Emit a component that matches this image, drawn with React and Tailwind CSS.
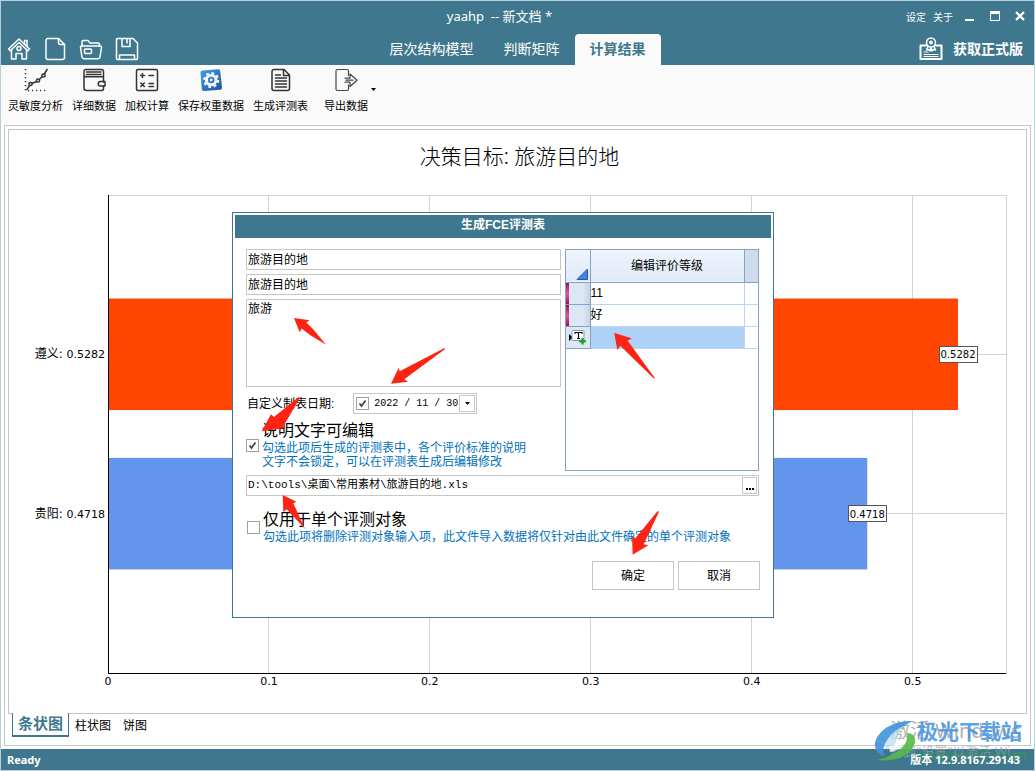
const AXIS_MAX = 0.558;
const TICKS = [0, 0.1, 0.2, 0.3, 0.4, 0.5];
const RESULTS = [
  { name: "遵义", value: 0.5282, color: "#ff4500", center: 33.33 },
  { name: "贵阳", value: 0.4718, color: "#6495ed", center: 66.67 },
];
const pct = (n) => `${n}%`;
const xOf = (v) => (v / AXIS_MAX) * 100;

const Svg = ({ className = "size-6", children, ...rest }) => (
  <svg viewBox="0 0 24 24" fill="none" stroke="currentColor" strokeWidth="1.5" strokeLinejoin="round" strokeLinecap="round" className={className} aria-hidden="true" {...rest}>
    {children}
  </svg>
);

const HomeIcon = () => (
  <Svg>
    <path d="M1.5 12 12 2l10.500 10-1.800 1.700L12 5.500l-8.700 8.200z" />
    <path d="M4.500 12.500V22H9v-5.500h6V22h4.500v-9.500M17.500 7V3.500h2.500V9.500" />
    <circle cx="12" cy="11.500" r="2" />
  </Svg>
);
const NewIcon = () => (
  <Svg>
    <path d="M5 1.500h10.500L21.500 7.500V20.500a2 2 0 0 1-2 2H5a2 2 0 0 1-2-2V3.500a2 2 0 0 1 2-2z" />
    <path d="M15.500 2v3.500a2 2 0 0 0 2 2h4" />
  </Svg>
);
const OpenIcon = () => (
  <Svg>
    <path d="M3 9V5a1.500 1.500 0 0 1 1.500-1.500H9l2 2.500h8a1.500 1.500 0 0 1 1.500 1.500V9" />
    <path d="M2.500 9h19a1 1 0 0 1 1 1.200L21 20a2 2 0 0 1-2 1.700H5A2 2 0 0 1 3 20L1.500 10.200A1 1 0 0 1 2.500 9z" />
    <rect x="5.500" y="12" width="7" height="4.500" rx="1" />
  </Svg>
);
const SaveIcon = () => (
  <Svg>
    <path d="M2.500 1.500H18L22.500 6v15.500a1 1 0 0 1-1 1h-19a1 1 0 0 1-1-1v-19a1 1 0 0 1 1-1z" />
    <path d="M7 2v7.500h8V2M12 2v4M4.500 22v-4h15v4" />
  </Svg>
);
const LicenseIcon = () => (
  <Svg>
    <path d="M7 8.500H1.500v13.500h21V8.500H17" strokeWidth="2" />
    <circle cx="12" cy="5.500" r="4.500" />
    <circle cx="12" cy="5.500" r="1.200" />
    <path d="M9 9.500 7.500 13l2.500-.5 1 1.500 1-3 1 3 1-1.500 2.500.5L15 9.500" />
    <path d="M5 15h4M5 17.500h14M5 19.500h14" strokeWidth="1" />
  </Svg>
);

const SensitivityIcon = () => (
  <Svg>
    <path d="M1.500 1v22M4 22.500h20" strokeDasharray="1.200 2.800" strokeLinecap="butt" />
    <path d="M3 21.500 6.500 16 14 13l6-6.500L23 1.500" />
    <circle cx="6.500" cy="16" r="1.600" fill="#fafafa" />
    <circle cx="14" cy="12.500" r="1.600" fill="#fafafa" />
    <circle cx="19.500" cy="7.500" r="1.600" fill="#fafafa" />
  </Svg>
);
const DetailIcon = () => (
  <Svg>
    <path d="M21.500 8V3.500a2 2 0 0 0-2-2H4a2 2 0 0 0-2 2V20a2.500 2.500 0 0 0 2.500 2.500h15a2 2 0 0 0 2-2V18M2 7a2 2 0 0 0 2 1.800h17.500V14" />
    <path d="M4.500 4h14.500M4.500 6.500h14.500" />
    <path d="M23 13.500h-4.500a2.200 2.200 0 0 0 0 4.500H23z" />
  </Svg>
);
const WeightIcon = () => (
  <Svg>
    <rect x="1.500" y="1.500" width="21" height="21" rx="1.500" />
    <path d="M5.500 7.500h4M7.500 5.500v4M14 7.500h4.500M5.800 15l3.500 3.500M9.300 15l-3.500 3.500M14 15.500h4.500M14 18.500h4.500" />
  </Svg>
);
const GearIcon = () => (
  <svg viewBox="0 0 24 24" className="size-6" aria-hidden="true">
    <defs>
      <linearGradient id="gear-bg" x1="0" y1="0" x2="1" y2="1">
        <stop offset="0" stopColor="#3fa4e4" />
        <stop offset="1" stopColor="#204f9f" />
      </linearGradient>
    </defs>
    <path d="M4 2.500 19 1.200a2 2 0 0 1 2.200 1.800L23 19.500a2 2 0 0 1-2 2.200L5 23a2 2 0 0 1-2.200-1.800L1.500 5A2.300 2.300 0 0 1 4 2.500z" fill="url(#gear-bg)" />
    <circle cx="12.200" cy="12" r="7" fill="none" stroke="#f1f5fa" strokeWidth="2.200" strokeDasharray="2.800 2.700" />
    <circle cx="12.200" cy="12" r="4.800" fill="none" stroke="#f1f5fa" strokeWidth="3" />
    <circle cx="12.200" cy="12" r="1.400" fill="#f1f5fa" />
  </svg>
);
const SheetIcon = () => (
  <Svg>
    <path d="M5 1.500h10L20.500 7v13.500a2 2 0 0 1-2 2H5a2 2 0 0 1-2-2v-17a2 2 0 0 1 2-2zM14.500 2v5.500h6" />
    <path d="M6.500 7h5M6.500 10h11M6.500 13h11M6.500 16h11M6.500 19h11" />
  </Svg>
);
const ExportIcon = () => (
  <Svg strokeWidth="1.200">
    <path d="M14.500 7.500V3a1.500 1.500 0 0 0-1.500-1.500h-9.500A1.500 1.500 0 0 0 2 3v18a1.500 1.500 0 0 0 1.500 1.500H13a1.500 1.500 0 0 0 1.500-1.500v-4" />
    <path d="M11 10.200h5V6l7 6.200-7 6.300v-4.300h-5M12 12.200h7" />
  </Svg>
);

const TOOLS = [
  { label: "灵敏度分析", Icon: SensitivityIcon },
  { label: "详细数据", Icon: DetailIcon },
  { label: "加权计算", Icon: WeightIcon },
  { label: "保存权重数据", Icon: GearIcon },
  { label: "生成评测表", Icon: SheetIcon },
];

function Header() {
  return (
    <header className="bg-[#3f788e] text-white">
      <div className="grid h-8 grid-cols-[1fr_auto_1fr] items-center pb-0.5">
        <span />
        <h1 className="whitespace-pre pr-9 text-[13px] leading-5">yaahp  -- 新文档 *</h1>
        <div className="flex items-center justify-end gap-[7px] pr-[9px] text-[10px]">
          <button type="button" className="pt-0.5">设定</button>
          <button type="button" className="pt-0.5">关于</button>
          <button type="button" aria-label="最小化" className="ml-[5px] flex h-[10px] w-3 items-end"><span className="h-0.5 w-[9px] bg-white" /></button>
          <button type="button" aria-label="最大化" className="ml-[6px] h-[10px] w-[10px] border border-t-[3px] border-white" />
          <button type="button" aria-label="关闭" className="ml-2">
            <svg viewBox="0 0 10 10" className="size-[10px]" stroke="#fff" strokeWidth="2.200"><path d="M1 1l8 8M9 1L1 9" /></svg>
          </button>
        </div>
      </div>
      <div className="grid h-8 grid-cols-[1fr_auto_1fr] items-end">
        <div className="flex gap-3 pb-1 pl-[6px]">
          <button type="button" aria-label="首页"><HomeIcon /></button>
          <button type="button" aria-label="新建"><NewIcon /></button>
          <button type="button" aria-label="打开"><OpenIcon /></button>
          <button type="button" aria-label="保存"><SaveIcon /></button>
        </div>
        <nav className="flex h-[31px] text-sm">
          <button type="button" className="px-[15px] pb-0.5">层次结构模型</button>
          <button type="button" className="px-[15px] pb-0.5">判断矩阵</button>
          <button type="button" className="rounded-t bg-[#fafafa] px-[15px] pb-0.5 font-bold text-[#3f788e]">计算结果</button>
        </nav>
        <div className="flex justify-end pr-[11px]">
          <button type="button" className="flex h-8 items-center gap-[10px] text-sm font-bold"><LicenseIcon />获取正式版</button>
        </div>
      </div>
    </header>
  );
}

function Toolbar() {
  return (
    <div className="flex h-[57px] bg-[#fafafa] pl-[7px] text-[11px] text-black">
      <div className="flex gap-[9px]">
        {TOOLS.map(({ label, Icon }) => (
          <button key={label} type="button" className="flex flex-col items-center pt-[3px] text-[#333]">
            <Icon />
            <span className="mt-[6px] leading-4 text-black">{label}</span>
          </button>
        ))}
      </div>
      <button type="button" className="ml-4 flex gap-[3px] pt-[3px] text-[#444]">
        <span className="flex flex-col items-center">
          <ExportIcon />
          <span className="mt-[6px] leading-4 text-black">导出数据</span>
        </span>
        <svg viewBox="0 0 5 3" className="mt-5 h-[3px] w-[5px]" aria-hidden="true"><path d="M0 0h5L2.500 3z" fill="#000" /></svg>
      </button>
    </div>
  );
}

function Chart() {
  return (
    <section className="flex flex-1 flex-col border-l border-t border-r border-[#c6c6c6] pb-10 pl-[99px] pr-5 pt-3">
      <h2 className="-ml-[75px] text-center text-[21px] font-light leading-7">决策目标: 旅游目的地</h2>
      <svg className="mt-[25px] min-h-[300px] w-full flex-1 overflow-visible font-['DejaVu_Sans','Noto_Sans_CJK_SC',sans-serif] text-[11px]" role="img" aria-label="决策目标: 旅游目的地">
        <rect width="100%" height="100%" fill="#fff" stroke="#d3d3d3" shapeRendering="crispEdges" />
        {TICKS.map((t) => (
          <g key={t} shapeRendering="crispEdges">
            <line x1={pct(xOf(t))} x2={pct(xOf(t))} y1="0" y2="100%" stroke="#d3d3d3" />
            <text x={pct(xOf(t))} y="100%" dy="12" textAnchor="middle">{t}</text>
          </g>
        ))}
        {RESULTS.map((r) => (
          <g key={r.name}>
            <line x1="0" x2="100%" y1={pct(r.center)} y2={pct(r.center)} stroke="#d3d3d3" shapeRendering="crispEdges" />
            <rect x="0" y={pct(r.center - 11.67)} width={pct(xOf(r.value))} height="23.330%" fill={r.color} />
            <svg x={pct(xOf(r.value))} y={pct(r.center)} className="overflow-visible">
              <rect x="-19" y="-8" width="38" height="16" fill="#fff" stroke="#555" shapeRendering="crispEdges" />
              <text y="4" textAnchor="middle" fontSize="10">{r.value}</text>
            </svg>
            <text x="-3" y={pct(r.center)} dy="4" textAnchor="end"><tspan fontSize="12">{r.name}: </tspan>{r.value}</text>
          </g>
        ))}
        <line x1="0" x2="0" y1="0" y2="100%" stroke="#000" shapeRendering="crispEdges" />
        <line x1="0" x2="100%" y1="100%" y2="100%" stroke="#000" shapeRendering="crispEdges" />
      </svg>
    </section>
  );
}

function Check({ id, label, defaultChecked }) {
  return (
    <span className="grid shrink-0">
      <input id={id} type="checkbox" aria-label={label} defaultChecked={defaultChecked} className="peer col-start-1 row-start-1 size-[13px] appearance-none border border-[#a0a0a0] bg-white" />
      <svg viewBox="0 0 13 13" className="pointer-events-none invisible col-start-1 row-start-1 size-[13px] peer-checked:visible" fill="none" stroke="#444" strokeWidth="1.800" aria-hidden="true"><path d="M3.500 6.500 5.500 9l4-5.500" /></svg>
    </span>
  );
}

const FIELD = "block w-full border border-[#c6c6c6] bg-white px-px text-xs outline-none";

function GradeTable() {
  return (
    <div className="w-[194px] border border-[#86a2c2] bg-white text-xs">
      <table className="w-full table-fixed border-collapse">
        <colgroup><col className="w-6" /><col /><col className="w-[14px]" /></colgroup>
        <thead>
          <tr className="h-8 border-b border-[#86a2c2] bg-linear-to-b from-[#eff5fd] to-[#dfe9f7]">
            <td className="border-r border-[#86a2c2] p-0 align-bottom">
              <svg viewBox="0 0 12 12" className="mb-0.5 ml-[10px] size-3" aria-hidden="true"><path d="M11.500 1v10.500H1z" fill="#3f83e8" stroke="#2459b5" /></svg>
            </td>
            <th scope="col" className="border-r border-[#86a2c2] p-0 font-normal">编辑评价等级</th>
            <td className="bg-[#cfdcee] p-0" />
          </tr>
        </thead>
        <tbody>
          {["11", "好"].map((grade) => (
            <tr key={grade} className="h-[22px]">
              <td className="border-b border-r border-[#86a2c2] bg-linear-to-r from-[#dbe7f4] from-70% to-[#c3d3e6] p-0">
                <div className="h-[21px] w-[3px] bg-linear-to-b from-[#a30850] via-[#e0559a] to-[#a30850]" />
              </td>
              <td className="border-b border-r border-[#bdd5f5] p-0 leading-4">{grade}</td>
              <td className="border-b border-[#bdd5f5] p-0" />
            </tr>
          ))}
          <tr className="h-[22px]">
            <td className="border-b border-r border-[#86a2c2] bg-[#dbe7f4] p-0">
              <svg viewBox="0 0 22 20" className="h-5 w-[22px]" aria-hidden="true">
                <path d="M3 7v7l4-3.500z" fill="#000" />
                <rect x="6" y="3.500" width="12" height="10" rx="1" fill="#fff" stroke="#8a9aac" />
                <path d="M9 7V5.500h7V7M12.500 5.500v6M11 11.500h3" stroke="#111" strokeWidth="1.200" fill="none" />
                <path d="M16.500 11v6.500M13.200 14.200h6.600" stroke="#2f9a24" strokeWidth="2.400" />
              </svg>
            </td>
            <td className="border-b border-r border-[#bdd5f5] bg-[#aed1f7] p-0" />
            <td className="border-b border-[#bdd5f5] p-0" />
          </tr>
        </tbody>
      </table>
    </div>
  );
}

const ARROWS = [
  "294,317 309.7,319.3 306.3,321.500 313,328 326,343.700 310,334 301.700,327.500 299.700,331.300",
  "391,382.700 398.700,366.700 399.700,370.300 445,346.700 444.500,348.500 404.300,378.300 408,380.700",
  "614.300,332 631.700,337.300 627.700,339.700 655,377.200 653.500,377.200 620.300,344.700 617.300,349",
  "261.700,430.300 271,413.300 274,416 299,395.700 299.700,397.500 283,425.700 287.300,426.700",
  "282.700,494 296.300,500.700 293.300,502.300 305,527.700 286.700,508.300 283.300,511",
  "632.700,553.700 632,535.700 635.300,537.300 657.700,510 659,510.700 643.700,543.300 648.300,544.300",
];

function Dialog() {
  return (
    <div role="dialog" aria-labelledby="dialog-title" className="absolute left-[231px] top-[211px] w-[542px] border border-[#3f788e] bg-white p-0.5 pb-[27px] font-['Liberation_Sans','Noto_Sans_CJK_SC',sans-serif]">
      <h2 id="dialog-title" className="h-[23px] bg-[#3f788e] text-center text-xs font-bold leading-[21px] text-white">生成FCE评测表</h2>
      <form className="pl-[11px] pr-3 pt-[11px]" onSubmit={(e) => e.preventDefault()}>
        <div className="flex gap-1">
          <div className="min-w-0 flex-1">
            <input aria-label="名称" defaultValue="旅游目的地" className={`${FIELD} h-[21px] pb-[3px]`} />
            <input aria-label="标题" defaultValue="旅游目的地" className={`${FIELD} mt-1 h-[21px] pb-[3px]`} />
            <textarea aria-label="说明" defaultValue="旅游" className={`${FIELD} mt-1 h-[88px] resize-none pt-px`} />
            <div className="mt-[6px] flex h-[21px] items-center gap-[19px] pl-px text-xs">
              <label htmlFor="date">自定义制表日期:</label>
              <div className="flex h-[21px] w-[124px] items-center border border-[#c6c6c6] pl-0.5 pr-px">
                <Check id="use-date" label="启用日期" defaultChecked />
                <input id="date" defaultValue="2022 / 11 / 30" className="min-w-0 flex-1 pl-[5px] font-['Liberation_Mono',monospace] text-[10px] outline-none" />
                <button type="button" aria-label="选择日期" className="grid h-[17px] w-4 shrink-0 place-items-center border border-[#c6c6c6]">
                  <svg viewBox="0 0 5 3" className="h-[3px] w-[5px]"><path d="M0 0h5L2.500 3z" fill="#000" /></svg>
                </button>
              </div>
            </div>
            <label htmlFor="editable" className="mb-0.5 mt-[7px] flex items-center gap-[3px] text-xs leading-[14px] text-[#0071bd]">
              <Check id="editable" defaultChecked />
              <span>
                <span className="block text-base leading-5 text-black">说明文字可编辑</span>
                勾选此项后生成的评测表中，各个评价标准的说明<br />文字不会锁定，可以在评测表生成后编辑修改
              </span>
            </label>
          </div>
          <GradeTable />
        </div>
        <div className="mt-1 flex h-[21px] items-center border border-[#c6c6c6] pr-px">
          <input aria-label="文件路径" defaultValue="D:\tools\桌面\常用素材\旅游目的地.xls" className="min-w-0 flex-1 px-px font-['Liberation_Mono','Noto_Sans_CJK_SC',monospace] text-[11px] outline-none" />
          <button type="button" aria-label="浏览" className="flex h-[17px] w-[15px] items-end justify-center gap-px border border-[#c6c6c6] pb-[3px]">
            <span className="size-0.5 bg-black" /><span className="size-0.5 bg-black" /><span className="size-0.5 bg-black" />
          </button>
        </div>
        <label htmlFor="single" className="mt-[14px] flex items-center gap-[3px] pl-px text-xs leading-[14px] text-[#0071bd]">
          <Check id="single" />
          <span>
            <span className="block text-base leading-5 text-black">仅用于单个评测对象</span>
            勾选此项将删除评测对象输入项，此文件导入数据将仅针对由此文件确定的单个评测对象
          </span>
        </label>
        <div className="-mr-px mt-[17px] flex justify-end gap-1 text-xs">
          <button type="submit" className="h-[29px] w-[82px] border border-[#c6c6c6]">确定</button>
          <button type="button" className="h-[29px] w-[82px] border border-[#c6c6c6]">取消</button>
        </div>
      </form>
      <svg viewBox="233 212 541 406" className="pointer-events-none absolute left-0 top-0 h-[406px] w-[541px]" fill="#ff2314" aria-hidden="true">
        {ARROWS.map((points) => <polygon key={points} points={points} />)}
      </svg>
    </div>
  );
}

function Watermark() {
  return (
    <div className="pointer-events-none absolute bottom-0 right-0 h-[53px] w-[160px]">
      <p className="absolute left-4 top-0 whitespace-nowrap text-xl leading-7 text-[#8c8c8c]/70">激活 Windows</p>
      <p className="absolute left-4 top-6 whitespace-nowrap text-[13px] leading-5 text-[#9aa5a8]/70">转到"设置"以激活 Wi</p>
      <p className="absolute left-11 top-7 whitespace-nowrap text-base font-bold leading-5 text-[#2f9a5a]/60">www.xz7.com</p>
      <svg viewBox="0 0 44 44" className="absolute left-0 top-1 size-11" aria-hidden="true">
        <path d="M39 0C22-1 4 8 1 22c-1 7 4 12 9 13C7 25 14 12 39 0z" fill="#3f93dc" opacity=".9" />
        <path d="M30 5C17 10 10 20 12 28c5 1 9-3 10-8 1-6 4-11 8-15z" fill="#b9dcf3" opacity=".7" />
        <path d="M3 39c16 2 35-3 38-18 1-6-3-9-8-9 2 12-9 22-30 27z" fill="#55b947" opacity=".9" />
        <path d="M15 25c6 0 11-2 14-7 1 7-5 12-13 13z" fill="#fff" opacity=".8" />
      </svg>
      <p className="absolute left-[43px] top-0 whitespace-nowrap text-[21px] font-bold leading-7 text-[#4696e4]/90">极光下载站</p>
    </div>
  );
}

export default function App() {
  return (
    <div className="relative flex min-h-screen flex-col border border-[#b5cfdb] bg-white font-['Noto_Sans','Noto_Sans_CJK_SC',sans-serif] text-black">
      <Header />
      <Toolbar />
      <main className="mx-[3px] mb-[3px] mt-[3px] flex flex-1 flex-col border border-[#c6c6c6] p-[3px] pb-2">
        <Chart />
        <nav className="flex border-t border-[#c6c6c6] pl-1 text-xs">
          <button type="button" className="-mt-px h-6 border-x border-b-2 border-[#3f788e] bg-white px-[5px] pb-0.5 text-[15px] font-bold leading-5 text-[#3f788e]">条状图</button>
          <button type="button" className="px-[6px]">柱状图</button>
          <button type="button" className="px-[6px]">饼图</button>
        </nav>
      </main>
      <Dialog />
      <footer className="flex h-[21px] items-center justify-between bg-[#3f788e] pl-[6px] pr-[14px] pt-px text-[11px] font-bold text-white">
        <span>Ready</span>
        <span className="relative z-10">版本 12.9.8167.29143</span>
      </footer>
      <Watermark />
    </div>
  );
}
